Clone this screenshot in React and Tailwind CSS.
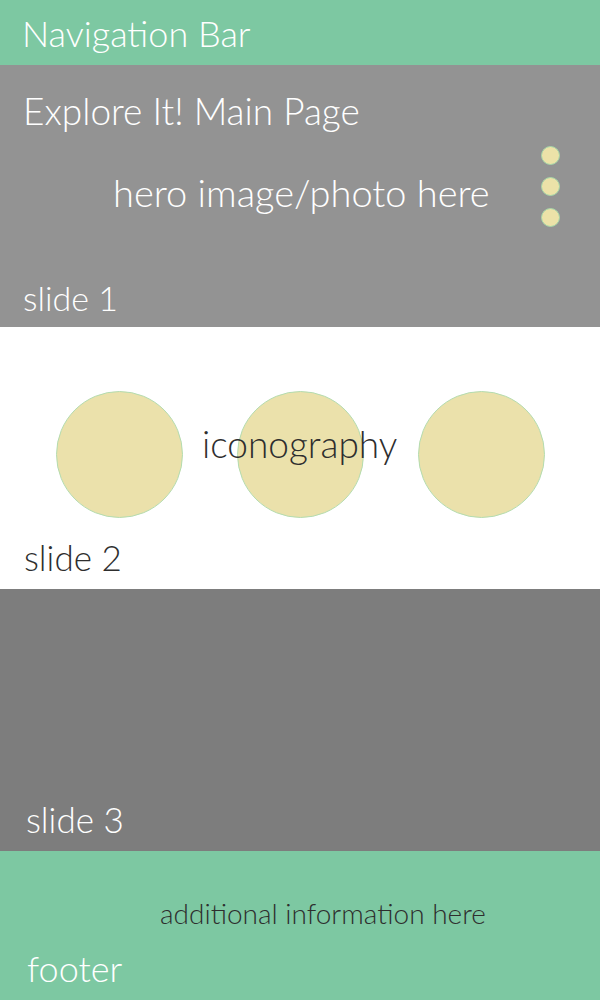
export default function App() {
  const font = { fontFamily: 'Lato, "Open Sans", sans-serif' };
  return (
    <div className="w-[600px] font-light" style={font}>
      <nav className="flex h-[65px] items-center bg-[#7dc8a2] pl-[22px]">
        <span className="text-[36px] leading-none text-white">Navigation Bar</span>
      </nav>

      <section className="flex h-[262px] flex-col bg-[#939393] pl-[23px] pr-[40px] text-white">
        <h1 className="mt-[27px] text-[37px] leading-none">Explore It! Main Page</h1>
        <div className="mt-[17px] flex items-start">
          <p className="ml-[90px] mt-[27px] flex-1 text-[38px] leading-none">hero image/photo here</p>
          <div className="flex flex-col gap-[12px]">
            <span className="block h-[19px] w-[19px] rounded-full border border-[#a6d6a8] bg-[#ece2a8]" />
            <span className="block h-[19px] w-[19px] rounded-full border border-[#a6d6a8] bg-[#ece2a8]" />
            <span className="block h-[19px] w-[19px] rounded-full border border-[#a6d6a8] bg-[#ece2a8]" />
          </div>
        </div>
        <p className="mt-auto mb-[12px] text-[34px] leading-none">slide 1</p>
      </section>

      <section className="flex h-[262px] flex-col bg-white pl-[24px] text-[#2e2e2e]">
        <div className="relative mt-[64px] flex gap-[54px] pl-[32px]">
          <span className="block h-[127px] w-[127px] rounded-full border border-[#b4dcb0] bg-[#ebe1ab]" />
          <span className="block h-[127px] w-[127px] rounded-full border border-[#b4dcb0] bg-[#ebe1ab]" />
          <span className="block h-[127px] w-[127px] rounded-full border border-[#b4dcb0] bg-[#ebe1ab]" />
          <span className="absolute left-[178px] top-[34px] text-[37px] leading-none">iconography</span>
        </div>
        <p className="mt-auto mb-[14px] text-[35px] leading-none">slide 2</p>
      </section>

      <section className="flex h-[262px] flex-col bg-[#7d7d7d] pl-[26px] text-white">
        <p className="mt-auto mb-[14px] text-[35px] leading-none">slide 3</p>
      </section>

      <footer className="flex h-[149px] flex-col bg-[#7dc8a2] pl-[27px]">
        <p className="ml-[133px] mt-[48px] text-[28px] leading-none text-[#2e2e2e]">additional information here</p>
        <p className="mt-auto mb-[14px] text-[36px] leading-none text-white">footer</p>
      </footer>
    </div>
  );
}
